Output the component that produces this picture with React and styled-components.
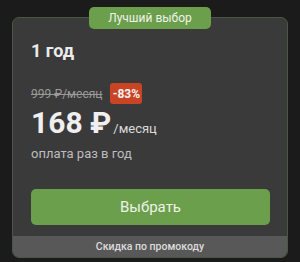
import React from 'react'
import styled, { createGlobalStyle } from 'styled-components'

const GlobalStyle = createGlobalStyle`
  html, body {
    margin: 0;
    padding: 0;
    background: #1b1b1b;
    font-family: Roboto, "Noto Sans", sans-serif;
  }
`

const Page = styled.div`
  width: 300px;
  height: 262px;
  padding: 17px 12px 0;
  box-sizing: border-box;
`

const Card = styled.div`
  position: relative;
  width: 276px;
  height: 241px;
  box-sizing: border-box;
  background: #3a3a3a;
  border: 1px solid #4b5743;
  border-radius: 7px;
  display: flex;
  flex-direction: column;
`

const TopBadge = styled.div`
  position: absolute;
  top: -11px;
  left: 76px;
  width: 122px;
  height: 22px;
  background: #6b9f4b;
  border-radius: 5px;
  color: #eef3ea;
  font-size: 12px;
  display: flex;
  align-items: center;
  justify-content: center;
`

const Body = styled.div`
  flex: 1;
  padding: 23px 18px 0 18px;
  display: flex;
  flex-direction: column;
`

const Period = styled.div`
  color: #ececec;
  font-size: 18px;
  font-weight: 700;
  line-height: 20px;
`

const OldRow = styled.div`
  margin-top: 22px;
  display: flex;
  align-items: center;
  gap: 8px;
`

const OldPrice = styled.span`
  color: #9a9a9a;
  font-size: 12px;
  text-decoration: line-through;
`

const Discount = styled.span`
  background: #c84424;
  color: #f4f4f4;
  font-size: 12px;
  font-weight: 700;
  border-radius: 3px;
  width: 32px;
  height: 21px;
  display: flex;
  align-items: center;
  justify-content: center;
`

const PriceRow = styled.div`
  margin-top: 2px;
  display: flex;
  align-items: baseline;
  gap: 2px;
`

const Price = styled.span`
  color: #efefef;
  font-size: 30px;
  font-weight: 700;
  line-height: 34px;
`

const PerMonth = styled.span`
  color: #dadada;
  font-size: 13px;
`

const Note = styled.div`
  margin-top: 6px;
  color: #bdbdbd;
  font-size: 13px;
`

const SelectButton = styled.button`
  margin-top: auto;
  margin-bottom: 11px;
  width: 239px;
  height: 36px;
  border: none;
  border-radius: 5px;
  background: #6b9f4b;
  color: #eef3ea;
  font-family: inherit;
  font-size: 15px;
`

const Footer = styled.div`
  height: 21px;
  background: #585858;
  border-radius: 0 0 6px 6px;
  color: #dcdcdc;
  font-size: 10.5px;
  font-weight: 500;
  display: flex;
  align-items: center;
  justify-content: center;
`

export default function App() {
  return (
    <>
      <GlobalStyle />
      <Page>
        <Card>
          <TopBadge>Лучший выбор</TopBadge>
          <Body>
            <Period>1 год</Period>
            <OldRow>
              <OldPrice>999 ₽/месяц</OldPrice>
              <Discount>-83%</Discount>
            </OldRow>
            <PriceRow>
              <Price>168 ₽</Price>
              <PerMonth>/месяц</PerMonth>
            </PriceRow>
            <Note>оплата раз в год</Note>
            <SelectButton>Выбрать</SelectButton>
          </Body>
          <Footer>Скидка по промокоду</Footer>
        </Card>
      </Page>
    </>
  )
}
